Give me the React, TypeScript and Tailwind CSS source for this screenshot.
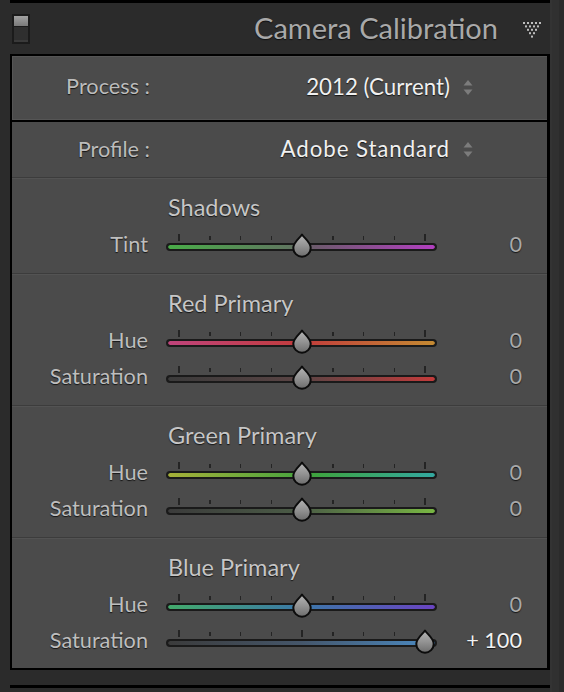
import React from "react";

const FONT = { fontFamily: "Lato, 'Open Sans', sans-serif" };

function Thumb({ left }: { left: number }) {
  return (
    <svg
      width="22"
      height="25"
      viewBox="0 0 22 25"
      className="absolute top-[8px]"
      style={{ left: left - 11 }}
    >
      <defs>
        <linearGradient id="thumbg" x1="0" y1="0" x2="0" y2="1">
          <stop offset="0" stopColor="#b6b6b6" />
          <stop offset="0.55" stopColor="#909090" />
          <stop offset="1" stopColor="#6c6c6c" />
        </linearGradient>
      </defs>
      <path
        d="M11 1.5 C13 5 19.7 9 19.7 15 A8.7 8.7 0 0 1 2.3 15 C2.3 9 9 5 11 1.5 Z"
        fill="url(#thumbg)"
        stroke="#0c0c0c"
        strokeWidth="2"
        strokeLinejoin="round"
      />
    </svg>
  );
}

const TICKS = [0, 1, 2, 3, 4, 5, 6, 7, 8];

function Slider({ gradient, value }: { gradient: string; value: number }) {
  const pos = 13 + ((value + 100) / 200) * 246;
  return (
    <div className="relative w-[271px] h-9 shrink-0">
      {TICKS.map((i) => {
        const tall = i === 0 || i === 8 || i === 4;
        return (
          <div
            key={i}
            className={
              tall
                ? "absolute top-[9px] h-[7px] w-[1.5px] bg-[#242424]"
                : "absolute top-[11px] h-[4px] w-[1.5px] bg-[#242424]"
            }
            style={{ left: 13 + i * 30.75 - 0.75 }}
          />
        );
      })}
      <div className="absolute left-0 right-0 top-[18px] h-[8px] rounded-full border-2 border-[#1a1a1a] bg-[#1a1a1a] overflow-hidden">
        <div className="w-full h-full rounded-full" style={{ background: gradient }} />
      </div>
      <Thumb left={pos} />
    </div>
  );
}

function SliderRow({
  label,
  gradient,
  value,
  display,
}: {
  label: string;
  gradient: string;
  value: number;
  display: string;
}) {
  return (
    <div className="flex items-center h-9">
      <div className="w-[136px] pt-[4px] text-right text-[21.7px] text-[#bebebe] [text-shadow:0_1px_1px_#151515] leading-none">
        {label}
      </div>
      <div className="ml-[18px]">
        <Slider gradient={gradient} value={value} />
      </div>
      <div
        className={
          value === 0
            ? "w-[85px] pt-[4px] text-right text-[21.7px] text-[#a9a9a9] [text-shadow:0_1px_1px_#151515] leading-none"
            : "w-[85px] pt-[4px] text-right text-[21.7px] text-[#f2f2f2] [text-shadow:0_1px_1px_#151515] leading-none"
        }
      >
        {display}
      </div>
    </div>
  );
}

function SectionHeader({ title }: { title: string }) {
  return (
    <div className="flex items-center h-9 pt-[2px] pl-[156px] text-[23.5px] text-[#c6c6c6] [text-shadow:0_1px_1px_#151515] leading-none">
      {title}
    </div>
  );
}

function Arrows() {
  return (
    <svg width="10" height="17" viewBox="0 0 10 17" className="shrink-0">
      <path d="M5 1 L9.5 6.5 L0.5 6.5 Z" fill="#7c7c7c" />
      <path d="M0.5 10.5 L9.5 10.5 L5 16 Z" fill="#7c7c7c" />
    </svg>
  );
}

function DotsTriangle() {
  const rows = [5, 4, 3, 2, 1];
  const rects: React.ReactElement[] = [];
  rows.forEach((n, r) => {
    for (let i = 0; i < n; i++) {
      rects.push(
        <rect
          key={`${r}-${i}`}
          x={r * 2 + i * 4}
          y={r * 3.4}
          width="2"
          height="2"
          fill="#bdbdbd"
        />
      );
    }
  });
  return (
    <svg width="18" height="16" viewBox="0 0 18 16">
      {rects}
    </svg>
  );
}

const DIVIDER = "border-t border-[#3c3c3c] shadow-[inset_0_1px_0_#535353]";

export default function App() {
  return (
    <div className="w-[564px] h-[692px] bg-[#2b2b2b] flex overflow-hidden" style={FONT}>
      <div className="w-[550px] pl-[10px] flex flex-col shrink-0">
        <div className="h-[3px] bg-black" />
        {/* header */}
        <div className="h-[51px] flex items-center pr-[9px]">
          <div className="ml-[2px] w-[18px] h-[30px] bg-[#1b1b1b] p-[2px] flex flex-col">
            <div className="h-[10px] bg-gradient-to-b from-[#a2a2a2] to-[#7a7a7a]" />
            <div className="flex-1 mt-[1px] bg-[#2f2f2f] border-b-2 border-[#3a3a3a]" />
          </div>
          <div className="flex-1 text-right text-[29px] text-[#a9a9a9] [text-shadow:0_1px_1px_#111] leading-none pb-[2px]">
            Camera Calibration
          </div>
          <div className="ml-[25px] pt-[2px]">
            <DotsTriangle />
          </div>
        </div>
        {/* panel */}
        <div className="border-2 border-r-[3px] border-black bg-[#4b4b4b] flex flex-col">
          <div className="h-[66px] pb-[2px] flex items-center border-b-2 border-black shadow-[inset_0_-1px_0_#555,inset_1px_1px_0_#555]">
            <div className="w-[138px] text-right text-[21.7px] text-[#bcbcbc] [text-shadow:0_1px_1px_#151515] leading-none">
              Process :
            </div>
            <div className="flex-1 text-right text-[22.3px] text-[#f0f0f0] [text-shadow:0_1px_1px_#151515] leading-none">
              2012 (Current)
            </div>
            <div className="ml-[13px] mr-[74px]">
              <Arrows />
            </div>
          </div>
          <div className="h-[55px] flex items-center">
            <div className="w-[138px] text-right text-[21.7px] text-[#bcbcbc] [text-shadow:0_1px_1px_#151515] leading-none">
              Profile :
            </div>
            <div className="flex-1 text-right text-[22.3px] tracking-[0.9px] text-[#f0f0f0] [text-shadow:0_1px_1px_#151515] leading-none">
              Adobe Standard
            </div>
            <div className="ml-[13px] mr-[74px]">
              <Arrows />
            </div>
          </div>
          <div className={`${DIVIDER} pt-[11px] pb-[12px]`}>
            <SectionHeader title="Shadows" />
            <SliderRow
              label="Tint"
              value={0}
              display="0"
              gradient="linear-gradient(to right,#49ad48,#5f775f 45%,#6d5a6d 55%,#b23fc0)"
            />
          </div>
          <div className={`${DIVIDER} pt-[11px] pb-[12px]`}>
            <SectionHeader title="Red Primary" />
            <SliderRow
              label="Hue"
              value={0}
              display="0"
              gradient="linear-gradient(to right,#c0447c,#c23c3c 50%,#c48a32)"
            />
            <SliderRow
              label="Saturation"
              value={0}
              display="0"
              gradient="linear-gradient(to right,#3b3b3b,#5a4444 50%,#c23b3b)"
            />
          </div>
          <div className={`${DIVIDER} pt-[11px] pb-[12px]`}>
            <SectionHeader title="Green Primary" />
            <SliderRow
              label="Hue"
              value={0}
              display="0"
              gradient="linear-gradient(to right,#a6b038,#3ea33f 55%,#33a8a0)"
            />
            <SliderRow
              label="Saturation"
              value={0}
              display="0"
              gradient="linear-gradient(to right,#3b3b3b,#4b5c46 50%,#78b743)"
            />
          </div>
          <div className={`${DIVIDER} pt-[11px] pb-[11px]`}>
            <SectionHeader title="Blue Primary" />
            <SliderRow
              label="Hue"
              value={0}
              display="0"
              gradient="linear-gradient(to right,#43ab6c,#3b78a8 50%,#6a44c2)"
            />
            <SliderRow
              label="Saturation"
              value={100}
              display="+ 100"
              gradient="linear-gradient(to right,#3b3b3b,#45566a 50%,#4b8bc4)"
            />
          </div>
        </div>
        <div className="h-[15px]" />
        <div className="h-[3px] bg-black" />
      </div>
      <div className="flex-1 flex">
        <div className="w-[2px] bg-[#333]" />
        <div className="w-[7px] bg-[#303030]" />
      </div>
    </div>
  );
}
